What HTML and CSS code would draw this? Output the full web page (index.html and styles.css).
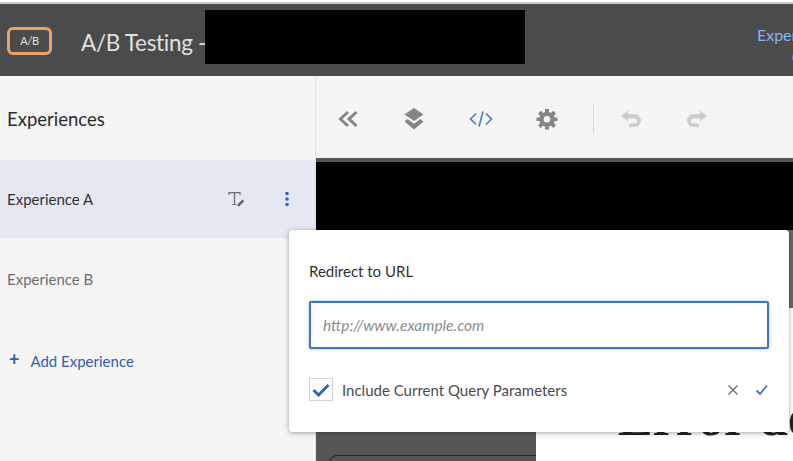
FILE: index.html
```html
<!DOCTYPE html>
<html>
<head>
    <title>A/B Testing</title>
    <link rel="stylesheet" href="styles.css">
</head>
<body>
    <div class="topline"></div>
    <div class="header">
        <div class="badge">A/B</div>
        <div class="title">A/B Testing -</div>
        <div class="redacted"></div>
        <div class="header-link">Experience Targeting<br>Campaigns</div>
    </div>
    <div class="main">
        <div class="sidebar">
            <div class="sidebar-title">Experiences</div>
            <div class="exp-row active">
                <span class="exp-name">Experience A</span>
                <svg class="rename-icon" width="18" height="18" viewBox="0 0 18 18">
                    <path d="M2 5V2.700h11V5M7.500 2.700V14.500M5.500 14.500h4" fill="none" stroke="#6e6e6e" stroke-width="1.200"/>
                    <path d="M10.500 14.500l5-5 1.700 1.700-5 5h-1.700z" fill="#5e5e5e"/>
                </svg>
                <svg class="more-icon" width="4" height="16" viewBox="0 0 4 16">
                    <circle cx="2" cy="2.500" r="1.800" fill="#2f65b8"/>
                    <circle cx="2" cy="8" r="1.800" fill="#2f65b8"/>
                    <circle cx="2" cy="13.500" r="1.800" fill="#2f65b8"/>
                </svg>
            </div>
            <div class="exp-row muted">
                <span class="exp-name">Experience B</span>
            </div>
            <div class="add-row">
                <span class="plus">+</span>
                <span>Add Experience</span>
            </div>
        </div>
        <div class="content">
            <div class="toolbar">
                <svg class="tool" width="22" height="18" viewBox="0 0 22 18">
                    <path d="M11 2L3.500 9l7.500 7M19.500 2L12 9l7.500 7" fill="none" stroke="#858585" stroke-width="3"/>
                </svg>
                <svg class="tool" width="22" height="22" viewBox="0 0 22 22">
                    <path d="M11 0l9.500 6.500L11 13 1.500 6.500z" fill="#858585"/>
                    <path d="M4.500 11l-3 2.500 9.500 8 9.500-8-3-2.500-6.500 4.800z" fill="#858585"/>
                </svg>
                <svg class="tool code" width="24" height="18" viewBox="0 0 24 18">
                    <path d="M7 3.500L1.500 9 7 14.500M17 3.500L22.500 9 17 14.500M14 1.500L10 16.500" fill="none" stroke="#4a78c4" stroke-width="1.600"/>
                </svg>
                <svg class="tool" width="22" height="22" viewBox="0 0 22 22">
                    <path d="M9 1h4v3l2 1 2.200-2.200 2.800 2.800L17.800 8l.8 1.500H21.500v3.500h-2.900l-.8 2 2.200 2.200-2.800 2.800L15 17.800l-2 .8V21.500H9v-2.900l-2-.8-2.200 2.200L2 17.200 4.200 15l-.8-2H.5V9.500h2.900l.8-1.500L2 5.600l2.800-2.800L7 5l2-1z" fill="#858585"/>
                    <circle cx="11" cy="11.200" r="3.300" fill="#f5f5f5"/>
                </svg>
                <div class="tool-sep"></div>
                <svg class="tool" width="22" height="18" viewBox="0 0 22 18">
                    <path d="M1 6l7-5.500V4h6.500a6 6 0 0 1 0 13H9v-3.500h5.500a2.500 2.500 0 0 0 0-5H8V11.500z" fill="#cdcdcd"/>
                </svg>
                <svg class="tool" width="22" height="18" viewBox="0 0 22 18">
                    <path d="M21 6l-7-5.500V4H7.500a6 6 0 0 0 0 13H13v-3.500H7.500a2.500 2.500 0 0 1 0-5H14V11.500z" fill="#cdcdcd"/>
                </svg>
            </div>
            <div class="preview">
                <div class="preview-black"></div>
                <div class="preview-body">
                    <div class="preview-side">
                        <div class="preview-box"></div>
                    </div>
                    <div class="preview-page">
                        <div class="preview-banner"></div>
                        <div class="error-heading">Error de</div>
                    </div>
                </div>
            </div>
        </div>
    </div>

    <div class="popover">
        <div class="pop-label">Redirect to URL</div>
        <input class="pop-input" type="text" placeholder="http://www.example.com">
        <div class="pop-footer">
            <div class="checkbox">
                <svg width="18" height="14" viewBox="0 0 18 14">
                    <path d="M1.500 7l5 5L16.500 2" fill="none" stroke="#2f65b8" stroke-width="3"/>
                </svg>
            </div>
            <span class="check-label">Include Current Query Parameters</span>
            <svg class="pop-cancel" width="12" height="12" viewBox="0 0 12 12">
                <path d="M1.500 1.500l9 9M10.500 1.500l-9 9" fill="none" stroke="#6e6e6e" stroke-width="1.400"/>
            </svg>
            <svg class="pop-ok" width="13" height="12" viewBox="0 0 13 12">
                <path d="M1.500 6.500l3.500 3.500 7-8.500" fill="none" stroke="#3d70bd" stroke-width="1.800"/>
            </svg>
        </div>
    </div>
</body>
</html>
```

FILE: styles.css
```css
html, body { margin: 0; height: 461px; overflow: hidden; }
body { font-family: Lato, sans-serif; background: white; color: #323232; }

.topline {
    height: 4px;
    box-sizing: border-box;
    border-top: 2px solid #fff;
    background: #c9c9c9;
}

.header {
    height: 72px;
    background: #4b4b4b;
    display: flex;
    align-items: center;
    overflow: hidden;
}
.badge {
    width: 39px;
    height: 22px;
    flex-shrink: 0;
    margin-left: 7px;
    margin-top: 2px;
    border: 3px solid #e9a262;
    border-radius: 6px;
    color: #e0e0e0;
    font-size: 11px;
    letter-spacing: -0.4px;
    line-height: 22px;
    text-align: center;
}
.title {
    width: 124px;
    flex-shrink: 0;
    margin-left: 29px;
    margin-top: 4px;
    font-size: 22.500px;
    letter-spacing: -0.3px;
    color: #e0e0e0;
    white-space: nowrap;
}
.redacted {
    width: 320px;
    height: 54px;
    background: #000;
    margin-top: -6px;
    flex-shrink: 0;
}
.header-link {
    flex-shrink: 0;
    margin-left: 230px;
    margin-top: 12px;
    width: 150px;
    text-align: center;
    color: #8ab4f0;
    font-size: 16px;
    line-height: 22px;
    white-space: nowrap;
}

.main { display: flex; height: 385px; }

.sidebar {
    width: 316px;
    flex-shrink: 0;
    background: #f5f5f5;
    box-sizing: border-box;
    border-right: 1px solid #e3e3e3;
}
.sidebar-title {
    height: 84px;
    padding: 0 7px;
    font-size: 18.500px;
    line-height: 86px;
    color: #2c2c2c;
}
.exp-row {
    padding: 0 7px;
    display: flex;
    align-items: center;
    font-size: 15px;
}
.exp-row.active { background: #e4e8f3; height: 78px; }
.exp-row.muted { color: #6e6e6e; height: 81px; }
.exp-name { flex: 1; }
.rename-icon { margin-right: 40px; }
.more-icon { margin-right: 19px; }
.add-row {
    padding: 0 9px;
    margin-top: 33px;
    display: flex;
    align-items: center;
    gap: 11px;
    color: #2f5fb0;
    font-size: 15px;
}
.plus { font-size: 18px; font-weight: bold; line-height: 18px; margin-top: -4px; }

.content { flex: 1; min-width: 0; }

.toolbar {
    height: 82px;
    background: #f5f5f5;
    display: flex;
    align-items: center;
    padding: 4px 0 0 21px;
    box-sizing: border-box;
}
.tool { flex-shrink: 0; margin-right: 44px; }
.tool.code { margin-right: 43px; }
.tool-sep {
    width: 1px;
    height: 30px;
    background: #dedede;
    margin-left: -9px;
    margin-right: 26px;
}

.preview { border-top: 4px solid #555; }
.preview-black { height: 68px; background: #000; }
.preview-body { display: flex; height: 231px; }
.preview-side {
    width: 220px;
    background: #555657;
    overflow: hidden;
}
.preview-box {
    margin: 225px 0 0 13px;
    width: 220px;
    height: 40px;
    border: 1px solid #222;
    border-radius: 8px;
}
.preview-page { flex: 1; background: #fff; overflow: hidden; }
.preview-banner { height: 78px; background: #666; }
.error-heading {
    margin: 80px 0 0 82px;
    font-family: "Liberation Serif", serif;
    font-size: 52px;
    font-weight: bold;
    white-space: nowrap;
    color: #222;
    line-height: 60px;
}

.popover {
    position: absolute;
    left: 289px;
    top: 230px;
    width: 500px;
    height: 202px;
    background: #fff;
    border-radius: 4px;
    box-shadow: 0 1px 5px rgba(0,0,0,0.35);
    padding: 0 20px;
    box-sizing: border-box;
}
.pop-label { margin-top: 31px; font-size: 15px; line-height: 20px; color: #323232; }
.pop-input {
    display: block;
    width: 460px;
    height: 48px;
    margin-top: 20px;
    box-sizing: border-box;
    border: 2px solid #3f74c4;
    border-radius: 2px;
    padding: 0 12px;
    font-family: Lato, sans-serif;
    font-size: 15.500px;
    font-style: italic;
    box-shadow: 0 0 3px rgba(63,116,196,0.5);
    outline: none;
}
.pop-input::placeholder { color: #8c8c8c; opacity: 1; }
.pop-footer { display: flex; align-items: center; margin-top: 29px; }
.checkbox {
    width: 22px;
    height: 21px;
    border: 1px solid #d3d3d3;
    display: flex;
    align-items: center;
    justify-content: center;
    margin-right: 9px;
}
.check-label { flex: 1; font-size: 15px; color: #4b4b4b; }
.pop-cancel { margin-right: 16px; }
.pop-ok { margin-right: 1px; }
```
